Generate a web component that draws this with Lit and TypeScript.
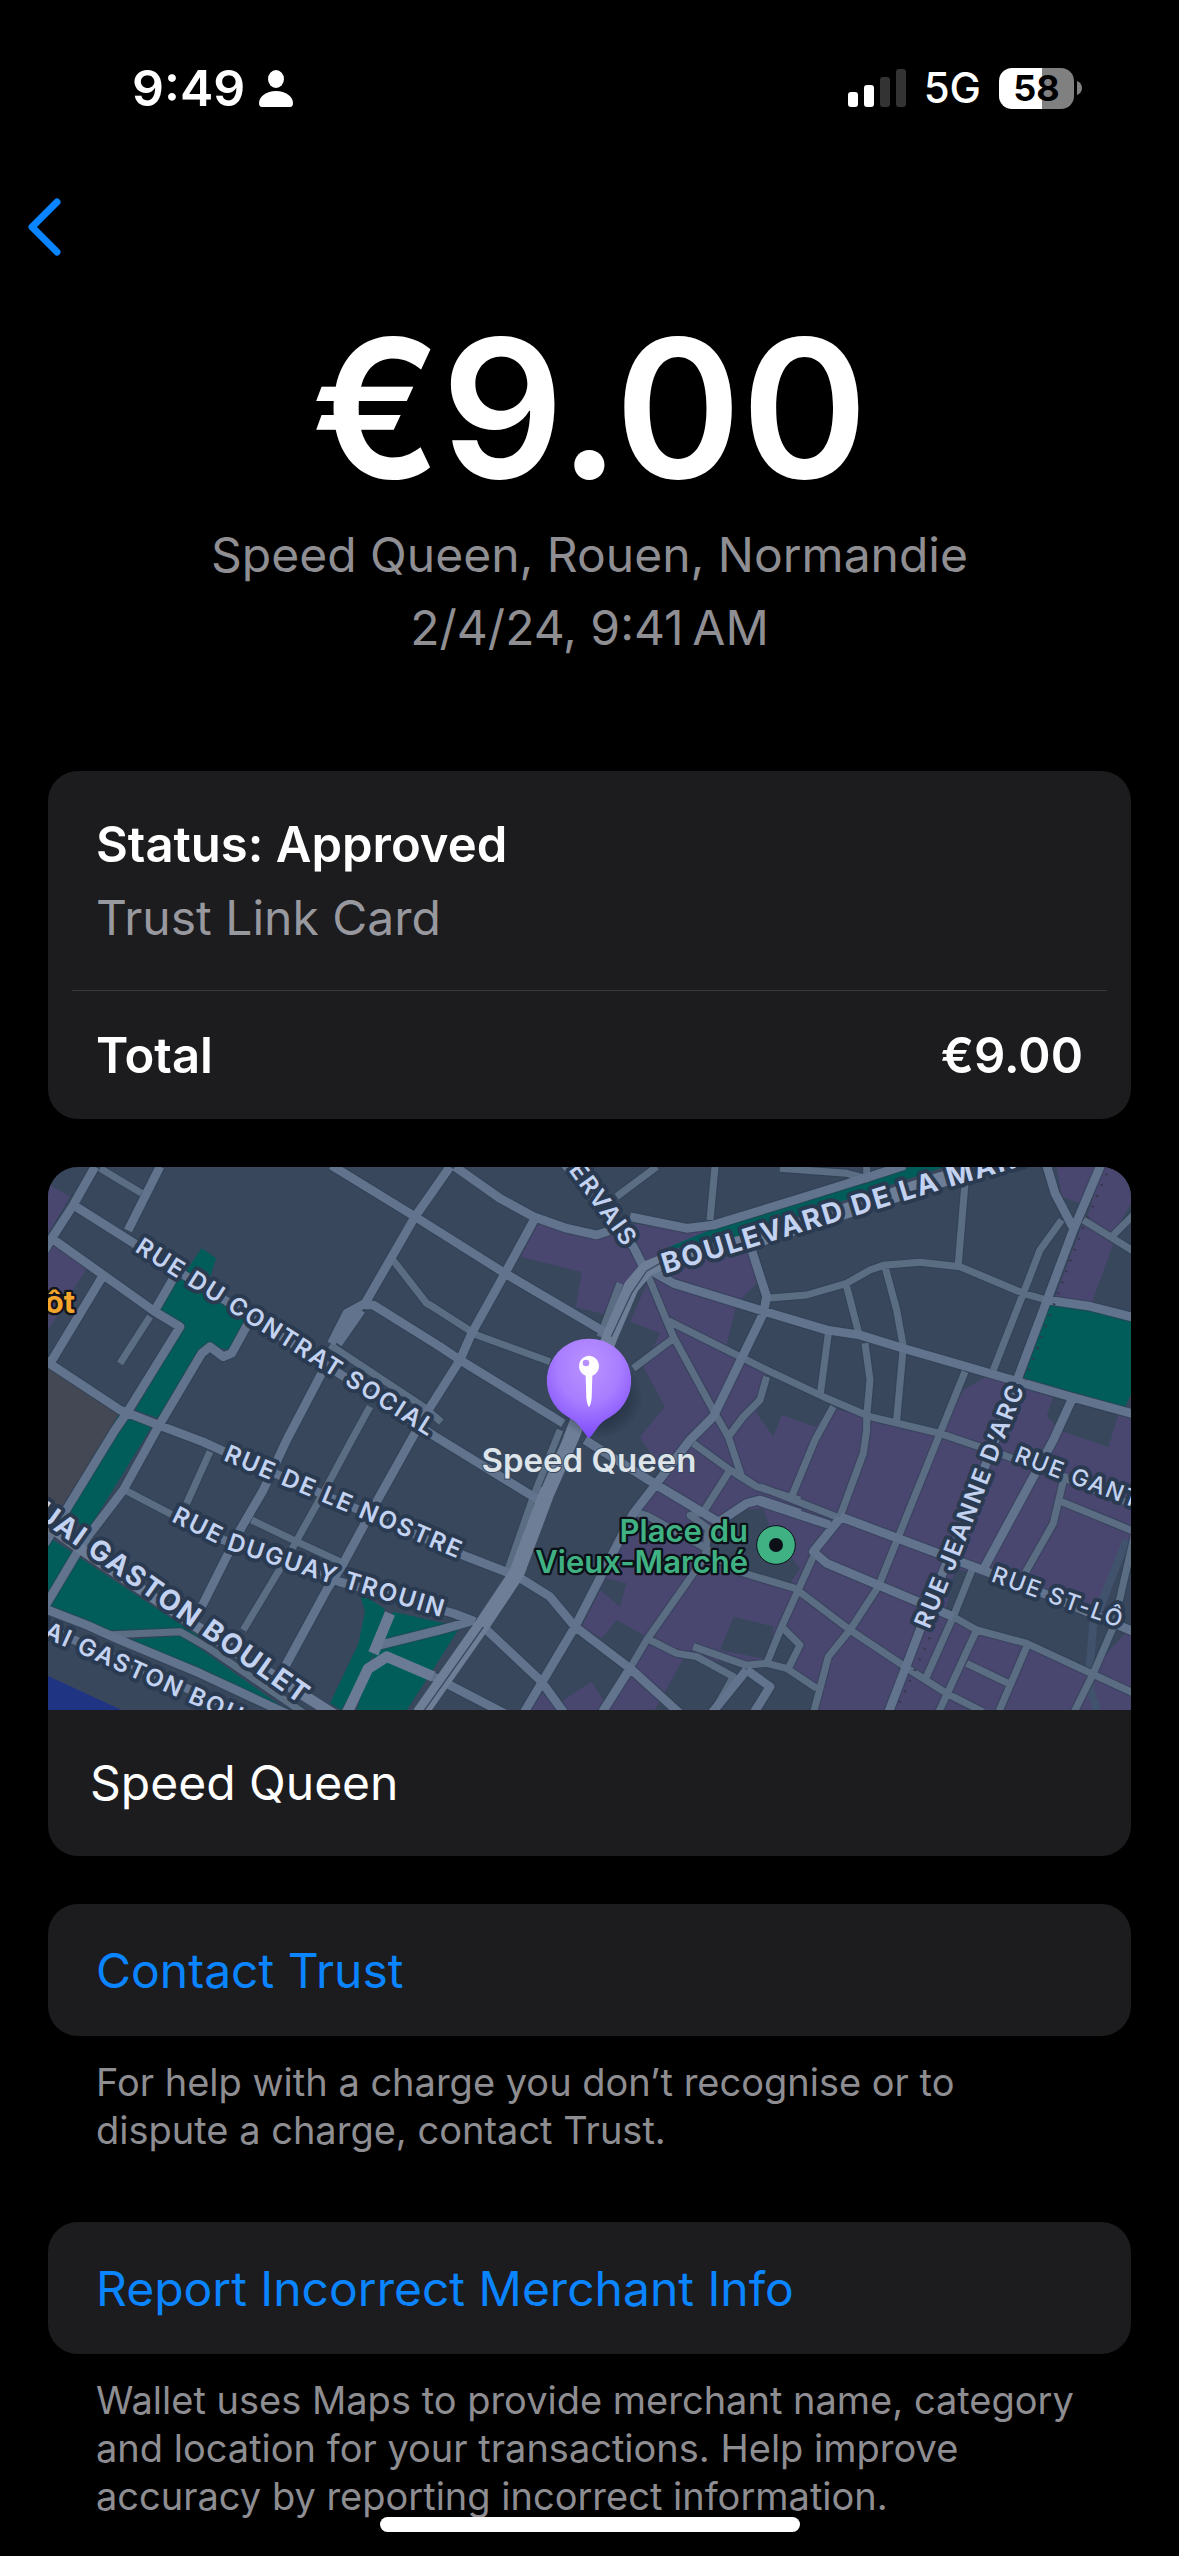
import { LitElement, html, css, svg } from "lit";
import { customElement, property } from "lit/decorators.js";

/* Map artwork. All coordinates are in a 3249 x 1629 drawing space. */

const PURPLE_AREAS = [
  "M0 50 66 89 0 200Z",
  "M0 220 116 304 0 490Z",
  "M1471 169 1556 189 1646 209 1746 169 1916 190 1986 189 2111 249 2126 349 2086 389 2061 429 2036 534 2156 609 2126 739 2176 809 2201 744 2301 779 2351 724 2466 749 2676 799 2746 669 2816 629 3016 689 2996 749 3046 794 3181 840 3211 744 3249 749 3249 1629 2300 1629 2310 1560 2216 1510 2100 1490 1906 1475 1820 1629 1640 1629 1746 1510 1786 1404 1706 1359 1661 1414 1601 1379 1656 1269 1716 1120 1756 1039 1850 930 1776 809 1851 719 1786 599 1836 499 1746 464 1801 340 1746 359 1666 441 1584 421 1601 315 1417 269Z",
  "M1546 1599 1631 1544 1666 1599 1640 1629 1550 1629Z",
  "M1486 1574 1526 1629 1446 1629Z",
  "M3026 -1 3146 -1 3096 109 3041 89Z",
  "M3166 -1 3249 -1 3249 109 3196 204 3116 154Z",
  "M3106 164 3196 229 3131 409 3021 389Z",
].join("");

const BLOCKS = [
  "M1656 1269 1676 1234 1736 1249 1716 1319Z",
  "M2080 1030 2146 1024 2171 1100 2256 1204 2226 1250 2040 1200 1960 1165 2010 1080Z",
  "M2056 1349 2176 1379 2166 1479 2016 1449Z",
  "M2721 1204 2986 1279 3160 1350 3249 1110 3249 1380 3130 1510 2786 1389 2690 1340Z",
  "M2196 1389 2246 1434 2221 1499 2166 1489Z",
  "M1746 464 1836 499 1800 540 1720 540Z",
].join("");

const PARKS = [
  "M461 244 504 274 485 335 600 460 551 549 486 539 456 559 331 754 261 729 401 489 336 429 381 344 416 310Z",
  "M211 744 311 779 120 1090 40 1030 165 830Z",
  "M0 1110 80 1160 0 1290Z",
  "M91 1169 470 1420 396 1394 190 1400 0 1320Z",
  "M220 1420 400 1405 476 1459 716 1629 660 1629Z",
  "M936 1279 1010 1325 996 1429 880 1629 846 1609 931 1430 951 1334Z",
  "M1036 1334 1236 1380 1150 1515 1076 1629 926 1629 976 1470 1000 1420Z",
  "M1986 189 2256 109 2590 -1 2690 -1 2256 145 2136 205 1840 250Z",
  "M3006 409 3126 429 3249 464 3249 680 3231 719 2926 634Z",
].join("");

const LANES = [
  "M156 4 281 79",
  "M306 449 216 589",
  "M1031 274 1136 409 1146 414 1286 504 1506 584",
  "M846 534 1126 719 1180 765",
  "M966 719 911 819 836 959 736 1139 676 1239 586 1389",
  "M221 964 376 1045",
  "M486 854 416 1009",
  "M611 1059 746 1124 876 1184",
  "M176 1404 396 1394 476 1439 770 1640",
  "M1536 789 1456 989 1376 1219",
  "M1716 349 1656 509",
  "M1801 329 1876 509 2001 739 2041 809 2081 929 2126 959 2256 999",
  "M1706 89 1826 -1",
  "M2001 -1 1986 159",
  "M1856 459 2156 609 2326 689 2466 749 2676 799 2866 864 3260 1015",
  "M1756 604 1876 514",
  "M2156 629 2136 699 2086 749 2041 809",
  "M2156 394 2276 384 2396 349 2466 309 2506 295 2616 286 2736 299 2926 379 2996 399",
  "M2751 49 2731 289",
  "M2396 359 2431 494",
  "M2511 299 2546 429 2566 539 2546 759",
  "M2341 499 2316 689",
  "M2451 529 2466 639 2456 749 2456 789 2446 859 2376 1049",
  "M2751 614 2676 799 2491 1259 2406 1389 2341 1469 2296 1640",
  "M3041 159 2976 249 2926 379 2836 609",
  "M3106 159 3260 255M3196 204 3260 140",
  "M2196 4 2396 19 2456 35V-5",
  "M2356 719 2301 819 2231 989",
  "M2136 959 2376 1054",
  "M2296 1169 2201 1379 2156 1489M2201 1379 2256 1434 2221 1504",
  "M1756 1035 1796 1045 1976 1145 2056 1209 2241 1264 2406 1389 2586 1509 2696 1579 2806 1635",
  "M2776 1199 2716 1349 2631 1539",
  "M2786 1389 2670 1640",
  "M2756 1489 2881 1549",
  "M2936 1439 2850 1640",
  "M3260 1100 3196 1380 3136 1519 3076 1640",
  "M3051 919 3016 1069 2931 1219M3041 1004 3260 1094",
  "M1936 829 2046 909 2126 959M2046 909 1966 1035 1926 1045 1981 1085 1971 1169 1796 1419 1746 1504",
  "M1806 1419 1886 1459 1946 1469 2056 1529 2000 1629",
  "M1936 1439 2096 1495 2156 1489 2216 1504 2306 1564",
  "M2716 1349 2786 1389 2936 1429 3260 1580",
].join("");

const STREETS = [
  "M141 -1 76 114 11 214 -10 250",
  "M336 -1 240 190",
  "M76 114 266 234 416 329 546 409 716 519 896 634 1156 805 1480 1004",
  "M11 214 166 324 321 434 396 479 236 739 201 789 51 1034 -10 1130",
  "M166 324 0 600",
  "M-10 580 216 729 331 774 466 825 521 850 1256 1169 1386 1219 1426 1239 1506 1289 1581 1379 1746 1504 1896 1640",
  "M376 334 321 429",
  "M600 470 551 559 526 569 486 539 461 559 331 779 226 969 126 1100 86 1159 -10 1320",
  "M850 -5 1101 149 1371 319 1670 495",
  "M1206 -1 1101 149 951 409 896 439 850 530M940 430 870 530M920 440 860 520",
  "M951 414 976 414 1176 539 1236 579 1546 769M1611 819 1826 954 2010 1064",
  "M821 619 716 819 646 969 576 1089 461 1319",
  "M1461 154 1371 319 1271 499 1236 579 1141 729 1100 800 986 1004 886 1189 836 1269 711 1499",
  "M376 1045 526 1119 876 1245 1216 1339 1281 1364",
  "M0 1329 116 1374 216 1419 456 1519 716 1640",
  "M0 1385 616 1650",
  "M1746 149 1916 184 1996 174 2256 94 2466 29 2570 -5",
  "M1221 -1 1356 94 1456 149 1556 184 1646 204 1706 184",
  "M1540 -20 1756 239 1801 329",
  "M1806 309 1876 349 2151 434 2336 489 2436 504 2566 544 2756 599 2876 634 3066 689 3260 742",
  "M2111 249 2156 389 2146 439 1996 749 1926 819 1826 949 1756 1039 1581 1379 1426 1640",
  "M2996 399 3126 418 3260 452",
  "M3160 -10 3076 189 2911 629 2830 850 2616 1389 2520 1640",
  "M2996 -5 3021 79 3076 184",
  "M3071 699 3016 819 2810 1200",
  "M2136 1004 2346 1074M2376 1049 2776 1199 2986 1279 3260 1395",
  "M2376 1054 2296 1154 2336 1189 2716 1349",
  "M2006 1069 2096 1009 2136 999 2256 1039",
  "M1316 1389 1481 1544 1550 1640",
  "M1746 1504 1660 1640",
  "M996 1434 1176 1389 1266 1364",
  "M2096 1509 1990 1640M2096 1509 2166 1559 2116 1640",
  "M1156 1529 1370 1640",
].join("");

const AVENUES = [
  "M-20 1060 90 1140 440 1375 760 1580 870 1650",
  "M1156 1529 1016 1469 960 1505 896 1640",
  "M1026 1339 976 1459",
].join("");

const HIGHWAY =
  "M2936 -35 2676 39 2386 134 2136 214 1836 289 1796 305 1750 359 1686 509 1571 809 1496 979 1406 1219 1306 1369 1116 1640";
const HIGHWAY_SEAM =
  "M1836 289 1796 312 1750 380 1690 509M1545 809 1480 960M1306 1380 1122 1640";

interface StreetLabel {
  id: string;
  text: string;
  path: string;
  size: "light" | "street" | "main";
  end?: boolean;
}

const LABELS: StreetLabel[] = [
  { id: "contrat", text: "RUE DU CONTRAT SOCIAL", path: "M258 252 911 664 1260 884", size: "street" },
  { id: "nostre", text: "RUE DE LE NOSTRE", path: "M524 879 1320 1213", size: "street" },
  { id: "duguay", text: "RUE DUGUAY TROUIN", path: "M368 1062 546 1150 886 1262 1320 1392", size: "street" },
  { id: "quai-north", text: "UAI GASTON BOULET", path: "M-180 950 762 1616", size: "main", end: true },
  { id: "quai-south", text: "UAI GASTON BOU", path: "M-68 1386 840 1794", size: "street" },
  { id: "gervais", text: "ERVAIS", path: "M1493 -84 1732 245", size: "street", end: true },
  { id: "boulevard", text: "BOULEVARD DE LA MARN", path: "M1851 320 2740 50 3150 -70", size: "main" },
  { id: "jeanne", text: "RUE JEANNE D’ARC", path: "M2644 1388 2726 1191 2851 865 2980 536", size: "street" },
  { id: "gant", text: "RUE GANT", path: "M2896 882 3400 1076", size: "light" },
  { id: "stlo", text: "RUE ST-LÔ", path: "M2827 1242 3300 1414", size: "light" },
];

@customElement("merchant-map")
class MerchantMap extends LitElement {
  static styles = css`
    :host { display: block; }
    .map { display: block; width: 100%; height: auto; font-family: Inter, "Liberation Sans", sans-serif; }
    .road { fill: none; stroke-linejoin: round; }
    .casing { stroke: #314154; stroke-opacity: 0.6; }
    .lane { stroke: #5b6d83; stroke-width: 21px; }
    .lane.casing { stroke: #314154; stroke-width: 28px; }
    .street { stroke: #62738d; stroke-width: 26px; }
    .street.casing { stroke: #314154; stroke-width: 33px; }
    .avenue { stroke: #6b7b95; stroke-width: 32px; }
    .highway { stroke: #6e7e97; stroke-width: 46px; }
    .seam { stroke: #3c4a5f; stroke-width: 4px; }
    .trail { stroke: #40526c; stroke-width: 24px; }
    .rail { stroke: #34384a; stroke-width: 8px; stroke-dasharray: 5 30; }
    .label { fill: #c2d2f0; stroke: #2a3a50; stroke-width: 24px; stroke-linejoin: round; paint-order: stroke; font-weight: 600; font-size: 72px; letter-spacing: 6px; }
    .label.street { stroke-width: 24px; }
    .label.light { font-size: 69px; font-weight: 500; }
    .label.main { font-size: 84px; font-weight: 700; }
    .station { fill: #f6a62c; stroke: #14161c; stroke-width: 14px; stroke-linejoin: round; paint-order: stroke; font-size: 93px; font-weight: 700; }
    .place { fill: #40b183; stroke: #0c1118; stroke-width: 14px; stroke-linejoin: round; paint-order: stroke; font-size: 93px; font-weight: 600; }
    .merchant { fill: #dde4ea; stroke: #38475c; stroke-width: 6px; paint-order: stroke; font-size: 99px; font-weight: 600; }
  `;

  render() {
    return html`
      <svg class="map" viewBox="0 0 3249 1629" role="img" aria-label="Map">
        <defs>
          <radialGradient id="pin-fill" cx="0.5" cy="0.28" r="0.75">
            <stop offset="0" stop-color="#ba93ff" />
            <stop offset="0.5" stop-color="#a87dff" />
            <stop offset="1" stop-color="#7a48fb" />
          </radialGradient>
          <radialGradient id="pin-shade">
            <stop offset="0.6" stop-color="#1c2738" stop-opacity="0.5" />
            <stop offset="1" stop-color="#1c2738" stop-opacity="0" />
          </radialGradient>
          ${LABELS.map((l) => svg`<path id=${l.id} d=${l.path} />`)}
        </defs>
        <rect width="3249" height="1629" fill="#38475c" />
        <path fill="#444854" d="M0 604 211 744 40 1020 0 1000Z" />
        <path fill="#1f3583" d="M0 1527 221 1629 0 1629Z" />
        <path fill="#494770" d=${PURPLE_AREAS} />
        <path fill="#38475c" d=${BLOCKS} />
        <path fill="#005d5a" d=${PARKS} />
        <path class="road trail" d="M3236 1119 3136 1369 3126 1489 3128 1570 3150 1640" />
        <path class="road lane casing" d=${LANES} />
        <path class="road street casing" d=${STREETS} />
        <path class="road lane" d=${LANES} />
        <path class="road street" d=${STREETS} />
        <path class="road rail" d="M3176 20 3100 195 2932 640M2660 1380 2540 1640" />
        <path class="road avenue" d=${AVENUES} />
        <path class="road highway" d=${HIGHWAY} />
        <path class="road seam" d=${HIGHWAY_SEAM} />
        ${LABELS.map(
          (l) => svg`<text class="label ${l.size === "street" ? "" : l.size}" text-anchor=${l.end ? "end" : "start"}><textPath href="#${l.id}" startOffset=${l.end ? "100%" : "0"}>${l.text}</textPath></text>`,
        )}
        <text class="station" x="81" y="439" text-anchor="end">ôt</text>
        <text class="place" x="2100" y="1124" text-anchor="end">Place du</text>
        <text class="place" x="2100" y="1217" text-anchor="end">Vieux-Marché</text>
        <circle cx="2184" cy="1134" r="58" fill="#40b183" stroke="#0c1118" stroke-width="3" />
        <circle cx="2184" cy="1134" r="21" fill="#0c1118" />
        <ellipse cx="1650" cy="690" rx="135" ry="125" fill="url(#pin-shade)" />
        <path fill="url(#pin-fill)" d="M1623 515a126 126 0 0 1 62 236q-27 14-42 38l-15 20q-5 5-10 0l-15-20q-15-24-42-38a126 126 0 0 1 62-236Z" />
        <path fill="#fff" fill-rule="evenodd" d="M1623 566a31 31 0 0 1 10 60l-2 66q-2 20-8 28-6-8-8-28l-2-66a31 31 0 0 1 10-60Zm-9 12a10 10 0 1 0 0 20 10 10 0 1 0 0-20Z" />
        <text class="merchant" x="1623" y="914" text-anchor="middle">Speed Queen</text>
      </svg>
    `;
  }
}

@customElement("status-bar")
class StatusBar extends LitElement {
  @property() time = "";
  @property({ type: Number }) battery = 0;

  static styles = css`
    :host { display: flex; justify-content: space-between; align-items: center; height: 56px; padding: 60px 97px 0 132px; color: #fff; }
    .group { display: flex; align-items: center; }
    .left { gap: 14px; }
    .right { gap: 18px; }
    .time { font-size: 50px; font-weight: 600; line-height: 56px; }
    .network { font-size: 42px; font-weight: 500; line-height: 56px; }
    .battery { display: flex; align-items: center; gap: 3px; }
    .cell { display: flex; align-items: center; justify-content: center; width: 75px; height: 41px; border-radius: 13px; color: #000; font-size: 36px; font-weight: 700; line-height: 41px; }
    svg { display: block; }
  `;

  render() {
    return html`
      <div class="group left">
        <span class="time">${this.time}</span>
        <svg width="34" height="37" viewBox="0 0 34 37" fill="#fff" aria-hidden="true">
          <ellipse cx="17" cy="9" rx="8" ry="9" />
          <path d="M3 37q-3 0-3-4C0 27 7 21 17 21s17 6 17 12q0 4-3 4Z" />
        </svg>
      </div>
      <div class="group right">
        <svg width="58" height="38" viewBox="0 0 58 38" aria-hidden="true">
          <rect x="0" y="23" width="10" height="15" rx="3" fill="#fff" />
          <rect x="16" y="16" width="10" height="22" rx="3" fill="#fff" />
          <rect x="32" y="8" width="10" height="30" rx="3" fill="#333" />
          <rect x="48" y="0" width="10" height="38" rx="3" fill="#333" />
        </svg>
        <span class="network">5G</span>
        <div class="battery">
          <span class="cell" style="background:linear-gradient(90deg,#fff ${this.battery}%,#808080 ${this.battery}%)">${this.battery}</span>
          <svg width="5" height="14" viewBox="0 0 5 14" fill="#808080" aria-hidden="true"><path d="M0 0q5 2 5 7t-5 7Z" /></svg>
        </div>
      </div>
    `;
  }
}

@customElement("app-root")
class AppRoot extends LitElement {
  static styles = css`
    :host { display: block; position: relative; box-sizing: border-box; min-height: 100vh; padding-bottom: 36px; background: #000; color: #fff; font-family: Inter, "Liberation Sans", sans-serif; font-size: 48px; line-height: 73px; }
    h1, p { margin: 0; font-weight: 400; }
    button { display: block; border: 0; margin: 0; font: inherit; text-align: left; cursor: pointer; }
    .nav { padding: 80px 28px 0; }
    .back { padding: 0; background: none; }
    .back svg { display: block; }
    .summary { padding-top: 48px; text-align: center; color: #8e8e93; }
    .amount { margin-bottom: 8px; color: #fff; font-size: 192px; font-weight: 600; line-height: 204px; }
    .content { padding: 107px 48px 0; }
    .card { border-radius: 30px; background: #1c1c1e; overflow: hidden; }
    .card + .card { margin-top: 48px; }
    .strong { font-size: 49px; font-weight: 600; }
    .status { padding: 37px 48px 36px; }
    .card-name { color: #98989f; }
    .total { display: flex; justify-content: space-between; margin: 0 24px; padding: 28px 24px 27px; border-top: 1px solid #3a3a3c; }
    .merchant { padding: 36px 42px 37px; }
    .action { width: 100%; padding: 30px 48px 29px; color: #0a84ff; }
    .note { padding: 22px 48px 0; color: #8d8d92; font-size: 38px; line-height: 48px; }
    .note + .action { margin-top: 68px; }
    .home { position: absolute; bottom: 24px; left: 50%; width: 420px; height: 15px; margin-left: -210px; border-radius: 8px; background: #fff; }
  `;

  render() {
    return html`
      <status-bar time="9:49" battery="58"></status-bar>
      <nav class="nav">
        <button class="back" aria-label="Back">
          <svg width="34" height="62" viewBox="0 0 34 62" fill="none" stroke="#0a84ff" stroke-width="7" stroke-linecap="round" stroke-linejoin="round"><path d="M29 6 4 31 29 56" /></svg>
        </button>
      </nav>
      <header class="summary">
        <h1 class="amount">€9.00</h1>
        <p>Speed Queen, Rouen, Normandie</p>
        <p>2/4/24, 9:41\u202fAM</p>
      </header>
      <main class="content">
        <section class="card">
          <div class="status">
            <p class="strong">Status: Approved</p>
            <p class="card-name">Trust Link Card</p>
          </div>
          <div class="total strong"><span>Total</span><span>€9.00</span></div>
        </section>
        <section class="card">
          <merchant-map></merchant-map>
          <p class="merchant">Speed Queen</p>
        </section>
        <button class="card action">Contact Trust</button>
        <p class="note">For help with a charge you don’t recognise or to dispute a charge, contact Trust.</p>
        <button class="card action">Report Incorrect Merchant Info</button>
        <p class="note">Wallet uses Maps to provide merchant name, category and location for your transactions. Help improve accuracy by reporting incorrect information.</p>
      </main>
      <div class="home"></div>
    `;
  }
}
